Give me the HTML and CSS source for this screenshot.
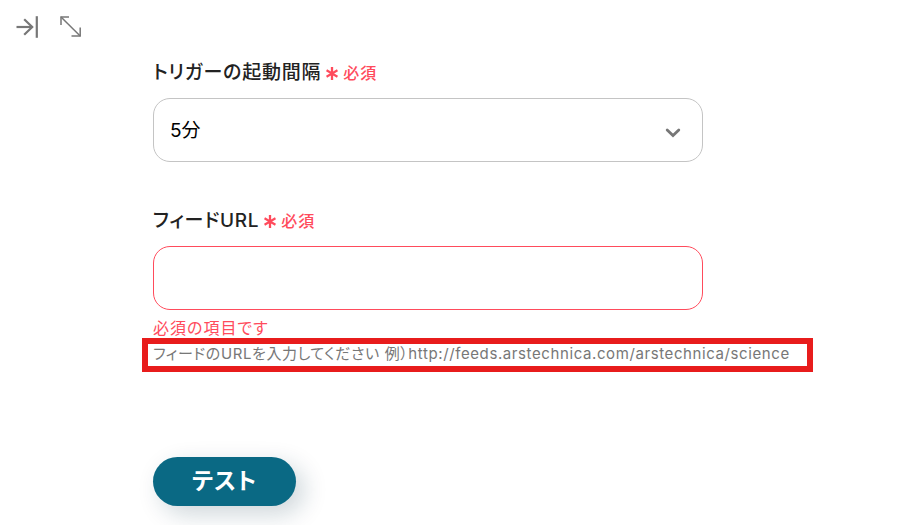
FILE: index.html
```
<!DOCTYPE html>
<html lang="ja">
<head>
    <meta charset="UTF-8">
    <meta name="viewport" content="width=device-width, initial-scale=1.0">
    <title>トリガーの設定</title>
    <link rel="stylesheet" href="styles.css">
</head>
<body>
    <header class="toolbar">
        <button type="button" class="icon-button" aria-label="パネルを閉じる">
            <svg width="24" height="24" viewBox="0 0 24 24" fill="none" stroke="currentColor" stroke-width="2.2">
                <path d="M1.5 12H17.5" />
                <path d="M9.2 4.2L17.2 12L9.2 19.8" />
                <path d="M21.8 1.2V22.8" />
            </svg>
        </button>
        <button type="button" class="icon-button" aria-label="全画面表示">
            <svg width="24" height="24" viewBox="0 0 24 24" fill="none" stroke="currentColor" stroke-width="1.5">
                <path d="M3 2L22.2 21" />
                <path d="M3 10V2H11" />
                <path d="M13.5 21H22.2V12.5" />
            </svg>
        </button>
    </header>

    <main class="panel">
        <form class="trigger-form" novalidate>
            <div class="field">
                <div class="field-head">
                    <label for="interval">トリガーの起動間隔</label>
                    <span class="required">
                        <svg width="12" height="14" viewBox="0 0 12 14" fill="none" stroke="currentColor" stroke-width="2.3">
                            <path d="M6 1V14M0.5 4.3L11.5 10.7M11.5 4.3L0.5 10.7" />
                        </svg>
                        必須
                    </span>
                </div>
                <div class="select-wrap">
                    <select id="interval" class="control">
                        <option>5分</option>
                        <option>10分</option>
                        <option>15分</option>
                        <option>30分</option>
                        <option>60分</option>
                    </select>
                    <svg class="chevron" width="16" height="10" viewBox="0 0 16 10" fill="none" stroke="currentColor" stroke-width="2.8" stroke-linecap="round" stroke-linejoin="miter">
                        <path d="M2.2 2L8 7.6L13.8 2" />
                    </svg>
                </div>
            </div>

            <div class="field">
                <div class="field-head">
                    <label for="feed-url">フィードURL</label>
                    <span class="required">
                        <svg width="12" height="14" viewBox="0 0 12 14" fill="none" stroke="currentColor" stroke-width="2.3">
                            <path d="M6 1V14M0.5 4.3L11.5 10.7M11.5 4.3L0.5 10.7" />
                        </svg>
                        必須
                    </span>
                </div>
                <input type="url" id="feed-url" class="control invalid" aria-describedby="feed-error feed-hint">
                <p id="feed-error" class="error">必須の項目です</p>
                <p id="feed-hint" class="hint">フィードのURLを入力してください 例）http://feeds.arstechnica.com/arstechnica/science</p>
            </div>

            <button type="button" class="test-button">テスト</button>
        </form>
    </main>
</body>
</html>
```

FILE: styles.css
```
:root {
    --text-color: #222;
    --muted-color: #777;
    --border-color: #c4c4c4;
    --error-color: #ff4b5c;
    --mark-color: #e81c1c;
    --primary-color: #0a6984;
}

* {
    margin: 0;
    padding: 0;
    box-sizing: border-box;
}

body {
    background: #fff;
    color: var(--text-color);
    font-family: Inter, "Noto Sans CJK JP", sans-serif;
    font-feature-settings: "palt";
}

button,
input,
select {
    font: inherit;
    font-feature-settings: inherit;
    letter-spacing: inherit;
}

.toolbar {
    display: flex;
    gap: 19px;
    padding: 15px 15px 0;
}

.icon-button {
    display: flex;
    border: none;
    background: none;
    color: var(--muted-color);
    cursor: pointer;
}

.panel {
    max-width: 597px;
    margin: 0 auto;
    padding: 19px 0;
}

.field {
    max-width: 550px;
    margin-bottom: 44px;
}

.field-head {
    display: flex;
    align-items: center;
    gap: 5px;
    margin-bottom: 10px;
    font-size: 19px;
    font-weight: 500;
    line-height: 30px;
    letter-spacing: 0.04em;
}

.required {
    display: flex;
    align-items: center;
    gap: 5px;
    color: var(--error-color);
    font-size: 16px;
    letter-spacing: 1px;
}

.select-wrap {
    position: relative;
}

.control {
    display: block;
    width: 100%;
    height: 64px;
    padding: 0 16px;
    border: 1px solid var(--border-color);
    border-radius: 17px;
    background: #fff;
    color: #000;
    font-size: 19px;
    appearance: none;
}

.control.invalid {
    border-color: var(--error-color);
}

.chevron {
    position: absolute;
    top: 50%;
    right: 22px;
    margin-top: -2px;
    color: var(--muted-color);
    pointer-events: none;
}

.error {
    margin-top: 4px;
    color: var(--error-color);
    font-size: 16px;
    line-height: 28px;
    letter-spacing: 1px;
}

.hint {
    position: relative;
    width: max-content;
    color: var(--muted-color);
    font-size: 15px;
    line-height: 24px;
    letter-spacing: 0.04em;
}

/* red frame around the hint */
.hint::after {
    content: '';
    position: absolute;
    inset: -4px -23px -6px -11px;
    border: 6px solid var(--mark-color);
    pointer-events: none;
}

.test-button {
    display: block;
    margin-top: 91px;
    padding: 0 39px;
    border: none;
    border-radius: 25px;
    background: var(--primary-color);
    box-shadow: 8px 8px 24px rgba(10, 50, 70, 0.2);
    color: #fff;
    font-size: 23px;
    font-weight: 700;
    line-height: 49px;
    letter-spacing: 1px;
    cursor: pointer;
}
```
